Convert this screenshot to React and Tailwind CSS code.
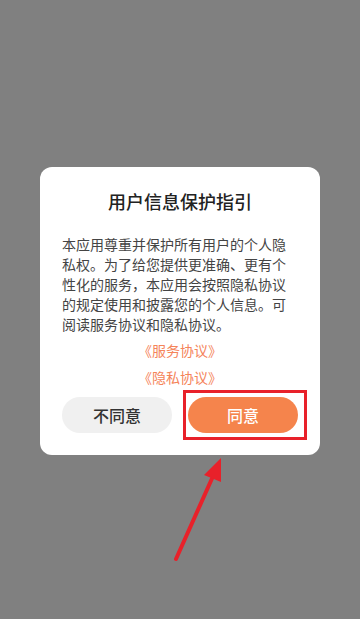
import React from "react";

export default function App() {
  return (
    <div
      className="relative w-full h-[619px] bg-[#808080] flex items-center justify-center overflow-hidden"
      style={{ fontFamily: '"Noto Sans CJK SC", "Noto Sans", sans-serif' }}
    >
      {/* Dialog */}
      <div className="w-[280px] bg-white rounded-[12px] px-[22px] pt-[21px] pb-[22px] mt-[3px]">
        <h1 className="text-center text-[18px] leading-[26px] font-medium text-[#222]">
          用户信息保护指引
        </h1>
        <p className="mt-[20px] text-[14px] leading-[20px] text-[#444] break-all">
          本应用尊重并保护所有用户的个人隐私权。为了给您提供更准确、更有个性化的服务，本应用会按照隐私协议的规定使用和披露您的个人信息。可阅读服务协议和隐私协议。
        </p>
        <div className="mt-[6px] flex flex-col items-center gap-[7px] text-[14px] leading-[20px] text-[#f5845a]">
          <span>《服务协议》</span>
          <span>《隐私协议》</span>
        </div>
        <div className="mt-[10px] flex justify-between">
          <button className="w-[110px] h-[36px] rounded-full bg-[#f0f0f0] text-[16px] text-[#333] font-medium">
            不同意
          </button>
          <div className="relative">
            <button className="w-[110px] h-[36px] rounded-full bg-[#f5844c] text-[16px] text-white font-medium">
              同意
            </button>
            {/* highlight box */}
            <div className="absolute left-[-5px] right-[-9px] top-[-7px] bottom-[-7px] border-[3px] border-[#e8212a]" />
          </div>
        </div>
      </div>

      {/* Arrow */}
      <svg
        className="absolute left-0 top-0"
        width="360"
        height="619"
        viewBox="0 0 360 619"
      >
        <line x1="176" y1="559" x2="214" y2="474" stroke="#e8212a" strokeWidth="4" strokeLinecap="round" />
        <polygon points="221,458 221,482 204,475" fill="#e8212a" />
      </svg>
    </div>
  );
}
